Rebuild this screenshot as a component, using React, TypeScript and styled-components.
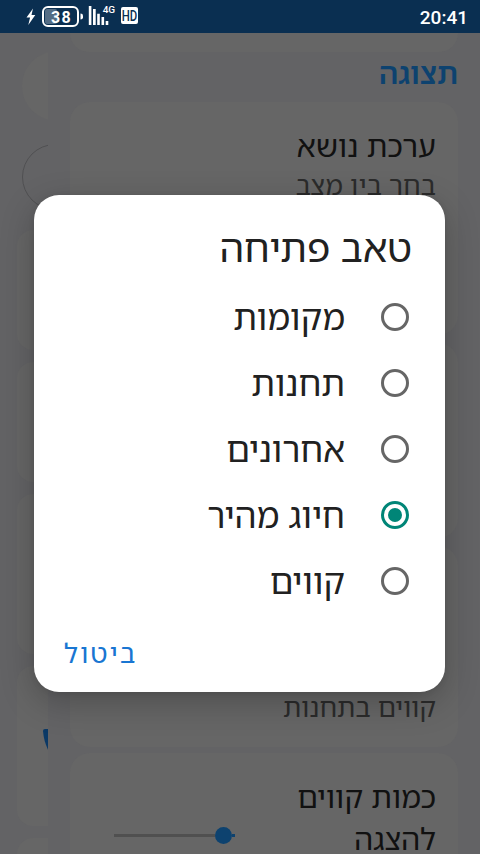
import React from "react";
import styled, { createGlobalStyle } from "styled-components";

const Global = createGlobalStyle`
  html, body { margin: 0; padding: 0; width: 480px; height: 854px; overflow: hidden; background: #636365; }
  * { box-sizing: border-box; }
`;

const hebrew = `"Noto Sans Hebrew", "Open Sans", "Noto Sans", sans-serif`;

const Screen = styled.div`
  position: relative;
  width: 480px;
  height: 854px;
  overflow: hidden;
  display: flex;
  flex-direction: column;
  background: #636365;
  font-family: ${hebrew};
`;

const StatusBar = styled.header`
  height: 33px;
  flex: none;
  background: #0a2f51;
  display: flex;
  justify-content: space-between;
  color: #fff;
`;

const Clock = styled.time`
  font: 500 19px/35px Roboto, sans-serif;
  padding-right: 12px;
`;

const Body = styled.div`
  display: flex;
  flex: 1;
  min-height: 0;
`;

const Rail = styled.aside`
  width: 48px;
  flex: none;
  overflow: hidden;
  padding: 18px 0 0 17px;
  display: flex;
  flex-direction: column;
`;

const Avatar = styled.div<{ $outline?: boolean }>`
  width: ${(p) => (p.$outline ? 66 : 70)}px;
  height: ${(p) => (p.$outline ? 66 : 70)}px;
  flex: none;
  margin: 0 0 ${(p) => (p.$outline ? 20 : 23)}px 5px;
  border-radius: 50%;
  background: ${(p) => (p.$outline ? "transparent" : "#666")};
  border: ${(p) => (p.$outline ? "1px solid #505052" : "0")};
`;

const RailCard = styled.div<{ $h: number }>`
  width: 120px;
  height: ${(p) => p.$h}px;
  flex: none;
  margin-bottom: 12px;
  border-radius: 16px;
  background: #666;
`;

const RailMark = styled.svg`
  display: block;
  margin: 62px 0 0 26px;
`;

const Settings = styled.main`
  flex: 1;
  padding: 0 22px;
  display: flex;
  flex-direction: column;
  overflow: hidden;
  direction: rtl;
`;

const Card = styled.section<{ $h: number; $gap?: number }>`
  width: 388px;
  height: ${(p) => p.$h}px;
  flex: none;
  margin-bottom: ${(p) => p.$gap ?? 8}px;
  padding: 23px 22px 0;
  border-radius: 20px;
  background: #666;
`;

const TopCard = styled(Card)`
  border-radius: 0 0 20px 20px;
  padding: 0;
`;

const Heading = styled.h2`
  margin: 0;
  height: 50px;
  flex: none;
  font-size: 29.7px;
  font-weight: 650;
  line-height: 41px;
  color: #0d426f;
`;

const Label = styled.div`
  font-size: 30.2px;
  line-height: 42px;
  color: #111;
  white-space: pre-line;
`;

const Hint = styled.div`
  font-size: 26.7px;
  line-height: 36px;
  color: #2b2b2b;
`;

const LowerCard = styled(Card)`
  display: flex;
  flex-direction: column;
  justify-content: flex-end;
  padding-bottom: 22px;
`;

const SliderCard = styled(Card)`
  display: flex;
  justify-content: space-between;
`;

const Slider = styled.div`
  direction: ltr;
  width: 121px;
  height: 18px;
  margin: 50px 0 0 22px;
  display: flex;
  align-items: center;
`;

const Track = styled.span<{ $w: number; $on?: boolean }>`
  width: ${(p) => p.$w}px;
  height: 3px;
  background: ${(p) => (p.$on ? "#0d426f" : "#505050")};
`;

const Thumb = styled.span`
  width: 17px;
  height: 17px;
  border-radius: 50%;
  background: #0d426f;
`;

const Dialog = styled.div`
  position: absolute;
  left: 34px;
  top: 195px;
  width: 411px;
  height: 497px;
  border-radius: 25px;
  background: #fff;
  box-shadow: 0 10px 34px rgba(0, 0, 0, 0.24), 0 1px 6px rgba(0, 0, 0, 0.08);
  direction: rtl;
  padding: 25px 33px 0 30px;
  color: #212121;
`;

const Title = styled.h1`
  margin: 0;
  height: 64px;
  font-size: 38.8px;
  font-weight: 400;
  line-height: 55px;
  white-space: nowrap;
`;

const Option = styled.label`
  height: 66px;
  display: flex;
  align-items: center;
  gap: 36px;
  padding-right: 3px;
`;

const OptionText = styled.span`
  font-size: 34.6px;
  line-height: 48px;
`;

const Radio = styled.span<{ $on?: boolean }>`
  width: 28px;
  height: 28px;
  flex: none;
  border-radius: 50%;
  border: 3px solid ${(p) => (p.$on ? "#008577" : "#666")};
  display: grid;
  place-items: center;
  &::after {
    content: "";
    width: 14px;
    height: 14px;
    border-radius: 50%;
    background: ${(p) => (p.$on ? "#008577" : "transparent")};
  }
`;

const Cancel = styled.button`
  display: block;
  margin: 18px auto 0 0;
  padding: 0;
  border: 0;
  background: none;
  font: 400 27px/42px ${hebrew};
  letter-spacing: 2.2px;
  color: #1976d2;
`;

const options = ["מקומות", "תחנות", "אחרונים", "חיוג מהיר", "קווים"];

const StatusIcons = () => (
  <svg width="150" height="33" viewBox="0 0 150 33">
    <path d="M33 8.5 26.5 17.5h3.6L28.3 25l7-10h-3.8z" fill="#fff" />
    <rect x="45" y="9" width="12" height="15" rx="2" fill="#546d85" />
    <rect x="43" y="7" width="35" height="19" rx="5" fill="none" stroke="#fff" strokeWidth="2" />
    <path d="M80.5 13.5q2.5 0 2.5 2.2v1.6q0 2.2-2.5 2.2z" fill="#fff" />
    <text x="51" y="22.7" fontFamily="Roboto" fontWeight="700" fontSize="16" letterSpacing="1.2" fill="#fff">38</text>
    <path d="M88.8 6h2.6v19h-2.6zM93 9h2.7v16H93zM97.2 13.7h2.6V25h-2.6zM101.5 17h2.6v8h-2.6zM105.7 21h2.6v4h-2.6z" fill="#fff" />
    <text x="102.7" y="13" fontFamily="Roboto" fontWeight="500" fontSize="9.4" textLength="12.5" lengthAdjust="spacingAndGlyphs" fill="#fff">4G</text>
    <rect x="121" y="7" width="17" height="17" rx="2" fill="#fff" />
    <text x="121.8" y="20.5" fontFamily="Roboto" fontWeight="500" fontSize="14" textLength="15.5" lengthAdjust="spacingAndGlyphs" fill="#0a2f51">HD</text>
  </svg>
);

export default function App() {
  return (
    <>
      <Global />
      <Screen>
        <StatusBar>
          <StatusIcons />
          <Clock>20:41</Clock>
        </StatusBar>
        <Body>
          <Rail>
            <Avatar />
            <Avatar $outline />
            <RailCard $h={120} />
            <RailCard $h={120} />
            <RailCard $h={160} />
            <RailCard $h={160}>
              <RailMark width="30" height="30" viewBox="0 0 30 30">
                <path d="M0 3Q0 1 2 1H24V27H8Q1 16 0 3Z" fill="#0b3966" />
              </RailMark>
            </RailCard>
            <RailCard $h={120} />
          </Rail>
          <Settings>
            <TopCard $h={19} $gap={0} />
            <Heading>תצוגה</Heading>
            <Card $h={233}>
              <Label>ערכת נושא</Label>
              <Hint>בחר בין מצב</Hint>
            </Card>
            <Card $h={195} />
            <LowerCard $h={201} $gap={6}>
              <Hint>קווים בתחנות</Hint>
            </LowerCard>
            <SliderCard $h={180}>
              <Label>{"כמות קווים\nלהצגה"}</Label>
              <Slider>
                <Track $w={101} />
                <Thumb />
                <Track $w={3} $on />
              </Slider>
            </SliderCard>
          </Settings>
        </Body>
        <Dialog role="dialog">
          <Title>טאב פתיחה</Title>
          {options.map((name, i) => (
            <Option key={name}>
              <Radio $on={i === 3} />
              <OptionText>{name}</OptionText>
            </Option>
          ))}
          <Cancel>ביטול</Cancel>
        </Dialog>
      </Screen>
    </>
  );
}
